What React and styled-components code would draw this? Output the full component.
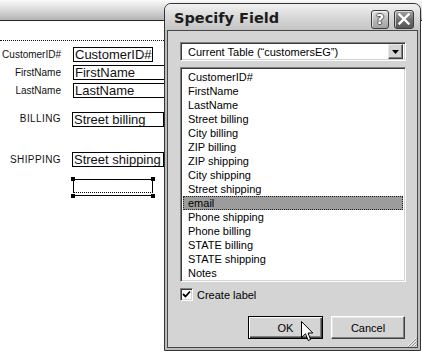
import React from 'react';
import styled, { createGlobalStyle } from 'styled-components';

const Global = createGlobalStyle`
  html, body { margin: 0; padding: 0; background: #fff; }
  body { width: 422px; height: 352px; overflow: hidden; }
`;

const Screen = styled.div`
  position: relative;
  width: 422px;
  height: 352px;
  overflow: hidden;
  background: #fff;
  display: flex;
  flex-direction: column;
  font-family: "Liberation Sans", Arial, sans-serif;
  color: #111;
`;

const TopBand = styled.div`
  flex: none;
  height: 20px;
  background: linear-gradient(#fafafa, #dcdcdc 45%, #b4b4b4);
  border-bottom: 1px solid #262626;
`;

const Canvas = styled.div`
  position: relative;
  flex: 1;
`;

const PartBoundary = styled.div`
  margin-top: 19px;
  width: 164px;
  border-top: 1px dotted #111;
`;

const FieldLabel = styled.div`
  position: absolute;
  left: 0;
  width: 61px;
  text-align: right;
  font-size: 10px;
  line-height: 12px;
  letter-spacing: ${p => (p.$caps ? '0.4px' : '0')};
  white-space: nowrap;
`;

const FieldBox = styled.div`
  position: absolute;
  box-sizing: border-box;
  height: 15px;
  border: 1px solid #000;
  background: #fff;
  padding-left: 1px;
  font-size: 13px;
  line-height: 13px;
  white-space: nowrap;
  overflow: hidden;
`;

const Selection = styled.div`
  position: absolute;
  left: 73px;
  top: 158px;
  width: 80px;
  height: 17px;
  box-sizing: border-box;
  border-bottom: 1px solid #000;
`;

const EmptyField = styled.div`
  box-sizing: border-box;
  height: 14px;
  border: 1px solid #000;
  border-bottom: 1px dotted #000;
`;

const Handle = styled.span`
  position: absolute;
  width: 4px;
  height: 4px;
  background: #000;
  left: ${p => (p.$right ? 'auto' : '-2px')};
  right: ${p => (p.$right ? '-2px' : 'auto')};
  top: ${p => (p.$bottom ? 'auto' : '-2px')};
  bottom: ${p => (p.$bottom ? '-3px' : 'auto')};
`;

const Dialog = styled.div`
  position: absolute;
  left: 164px;
  top: 3px;
  width: 257px;
  height: 348px;
  box-sizing: border-box;
  border: 1px solid #333;
  border-radius: 7px 7px 0 0;
  background: #bcbcbc;
  padding: 0 2px 2px;
  display: flex;
  flex-direction: column;
  z-index: 2;
  font-family: "Liberation Sans", Arial, sans-serif;
`;

const TitleBar = styled.div`
  flex: none;
  height: 26px;
  margin: 0 -2px;
  border-radius: 6px 6px 0 0;
  background: linear-gradient(#f2f2f2, #dadada 45%, #c4c4c4);
  display: flex;
  align-items: center;
  padding: 0 6px 0 9px;
`;

const Title = styled.div`
  flex: 1;
  font-family: "DejaVu Sans", Verdana, sans-serif;
  font-weight: bold;
  font-size: 14.5px;
  color: #1c1c1c;
  margin-top: 1px;
`;

const TitleButtons = styled.div`
  display: flex;
  gap: 5px;
  margin-top: 4px;
`;

const CapButton = styled.div`
  box-sizing: border-box;
  width: ${p => p.$w}px;
  height: 19px;
  border: 1px solid #3c3c3c;
  border-radius: 3px;
  background: ${p => (p.$dark
    ? 'linear-gradient(#a4a4a4, #6c6c6c 55%, #585858)'
    : 'linear-gradient(#e4e4e4, #b8b8b8 55%, #a2a2a2)')};
  box-shadow: inset 1px 1px rgba(255,255,255,0.6);
  display: flex;
  align-items: center;
  justify-content: center;
`;

const HelpGlyph = styled.span`
  font-family: "DejaVu Sans", Verdana, sans-serif;
  font-weight: bold;
  font-size: 14px;
  line-height: 14px;
  color: #fff;
  text-shadow: -1px 0 #555, 1px 0 #555, 0 -1px #555, 0 1px #555;
`;

const Client = styled.div`
  position: relative;
  flex: 1;
  border: 1px solid #484848;
  background: #d4d4d4;
  display: flex;
  flex-direction: column;
  padding: 11px 11px 8px 12px;
  font-size: 11px;
  color: #000;
`;

const Sunken = styled.div`
  box-sizing: border-box;
  background: #fff;
  border: 1px solid;
  border-color: #808080 #fff #fff #808080;
  box-shadow: inset 1px 1px #3a3a3a, inset -1px -1px #d4d4d4;
`;

const Combo = styled(Sunken)`
  flex: none;
  height: 19px;
  display: flex;
  align-items: center;
  padding: 0 2px 0 7px;
`;

const ComboText = styled.span`
  flex: 1;
  white-space: nowrap;
`;

const ComboArrow = styled.div`
  box-sizing: border-box;
  width: 15px;
  height: 15px;
  background: #d4d4d4;
  border: 1px solid;
  border-color: #e8e8e8 #404040 #404040 #e8e8e8;
  box-shadow: inset -1px -1px #808080;
  display: flex;
  align-items: center;
  justify-content: center;
`;

const ListBox = styled(Sunken)`
  flex: none;
  margin-top: 6px;
  height: 215px;
  padding: 2px;
`;

const ListItem = styled.div`
  box-sizing: border-box;
  height: 14px;
  line-height: 13px;
  padding-left: ${p => (p.$selected ? '4px' : '5px')};
  background: ${p => (p.$selected ? '#9c9c9c' : 'transparent')};
  border: ${p => (p.$selected ? '1px dotted #222' : 'none')};
  line-height: ${p => (p.$selected ? '12px' : '14px')};
  white-space: nowrap;
`;

const CheckRow = styled.label`
  margin-top: 6px;
  display: flex;
  align-items: center;
  gap: 4px;
  height: 13px;
`;

const CheckBox = styled(Sunken)`
  width: 13px;
  height: 13px;
  display: flex;
  align-items: center;
  justify-content: center;
`;

const ButtonRow = styled.div`
  margin-top: auto;
  display: flex;
  justify-content: flex-end;
  gap: 8px;
  padding-right: 1px;
`;

const PushButton = styled.div`
  box-sizing: border-box;
  width: ${p => p.$w}px;
  height: 23px;
  background: #d4d4d4;
  display: flex;
  align-items: center;
  justify-content: center;
  border: 1px solid;
  border-color: ${p => (p.$default ? '#000' : '#fff #404040 #404040 #fff')};
  box-shadow: ${p => (p.$default
    ? 'inset 1px 1px #fff, inset -1px -1px #404040, inset -2px -2px #808080'
    : 'inset -1px -1px #808080, inset 1px 1px #e6e6e6')};
`;

const Grip = styled.svg`
  position: absolute;
  right: 0;
  bottom: 0;
`;

const Cursor = styled.svg`
  position: absolute;
  left: 301px;
  top: 321px;
  z-index: 3;
`;

const labels = [
  { text: 'CustomerID#', top: 28 },
  { text: 'FirstName', top: 46 },
  { text: 'LastName', top: 64 },
  { text: 'BILLING', top: 92, caps: true },
  { text: 'SHIPPING', top: 133, caps: true },
];

const fields = [
  { text: 'CustomerID#', left: 73, top: 26, width: 80 },
  { text: 'FirstName', left: 73, top: 44, width: 120 },
  { text: 'LastName', left: 73, top: 62, width: 120 },
  { text: 'Street billing', left: 72, top: 91, width: 92 },
  { text: 'Street shipping', left: 72, top: 131, width: 92 },
];

const items = [
  'CustomerID#', 'FirstName', 'LastName', 'Street billing', 'City billing',
  'ZIP billing', 'ZIP shipping', 'City shipping', 'Street shipping', 'email',
  'Phone shipping', 'Phone billing', 'STATE billing', 'STATE shipping', 'Notes',
];

export default function App() {
  return (
    <Screen>
      <Global />
      <TopBand />
      <Canvas>
        <PartBoundary />
        {labels.map(l => (
          <FieldLabel key={l.text} $caps={l.caps} style={{ top: l.top }}>{l.text}</FieldLabel>
        ))}
        {fields.map(f => (
          <FieldBox key={f.text} style={{ left: f.left, top: f.top, width: f.width }}>{f.text}</FieldBox>
        ))}
        <Selection>
          <EmptyField />
          <Handle />
          <Handle $right />
          <Handle $bottom />
          <Handle $right $bottom />
        </Selection>
      </Canvas>

      <Dialog>
        <TitleBar>
          <Title>Specify Field</Title>
          <TitleButtons>
            <CapButton $w={18}><HelpGlyph>?</HelpGlyph></CapButton>
            <CapButton $w={20} $dark>
              <svg width="12" height="12" viewBox="0 0 12 12">
                <path d="M1.5 1.5 L10.5 10.5 M10.5 1.5 L1.5 10.5" stroke="#fff" strokeWidth="2.4" strokeLinecap="square" />
              </svg>
            </CapButton>
          </TitleButtons>
        </TitleBar>
        <Client>
          <Combo>
            <ComboText>Current Table (“customersEG”)</ComboText>
            <ComboArrow>
              <svg width="7" height="4" viewBox="0 0 7 4"><path d="M0 0 H7 L3.5 4 Z" fill="#000" /></svg>
            </ComboArrow>
          </Combo>
          <ListBox>
            {items.map(it => (
              <ListItem key={it} $selected={it === 'email'}>{it}</ListItem>
            ))}
          </ListBox>
          <CheckRow>
            <CheckBox>
              <svg width="9" height="9" viewBox="0 0 9 9">
                <path d="M1 4 L3.5 6.5 L8 1.5" stroke="#000" strokeWidth="1.8" fill="none" />
              </svg>
            </CheckBox>
            <span>Create label</span>
          </CheckRow>
          <ButtonRow>
            <PushButton $w={75} $default>OK</PushButton>
            <PushButton $w={74}>Cancel</PushButton>
          </ButtonRow>
          <Grip width="11" height="11" viewBox="0 0 11 11">
            <path d="M10 2 L2 10 M10 5 L5 10 M10 8 L8 10" stroke="#fff" strokeWidth="1" />
            <path d="M10.5 2.5 L2.5 10.5 M10.5 5.5 L5.5 10.5 M10.5 8.5 L8.5 10.5" stroke="#808080" strokeWidth="1" />
          </Grip>
        </Client>
      </Dialog>

      <Cursor width="13" height="21" viewBox="0 0 13 21">
        <path d="M0.5 0.5 L0.5 16.5 L4.5 12.8 L7.2 19.5 L9.6 18.5 L7 12 L11.8 12 Z" fill="#fff" stroke="#000" strokeWidth="1" strokeLinejoin="miter" />
      </Cursor>
    </Screen>
  );
}
